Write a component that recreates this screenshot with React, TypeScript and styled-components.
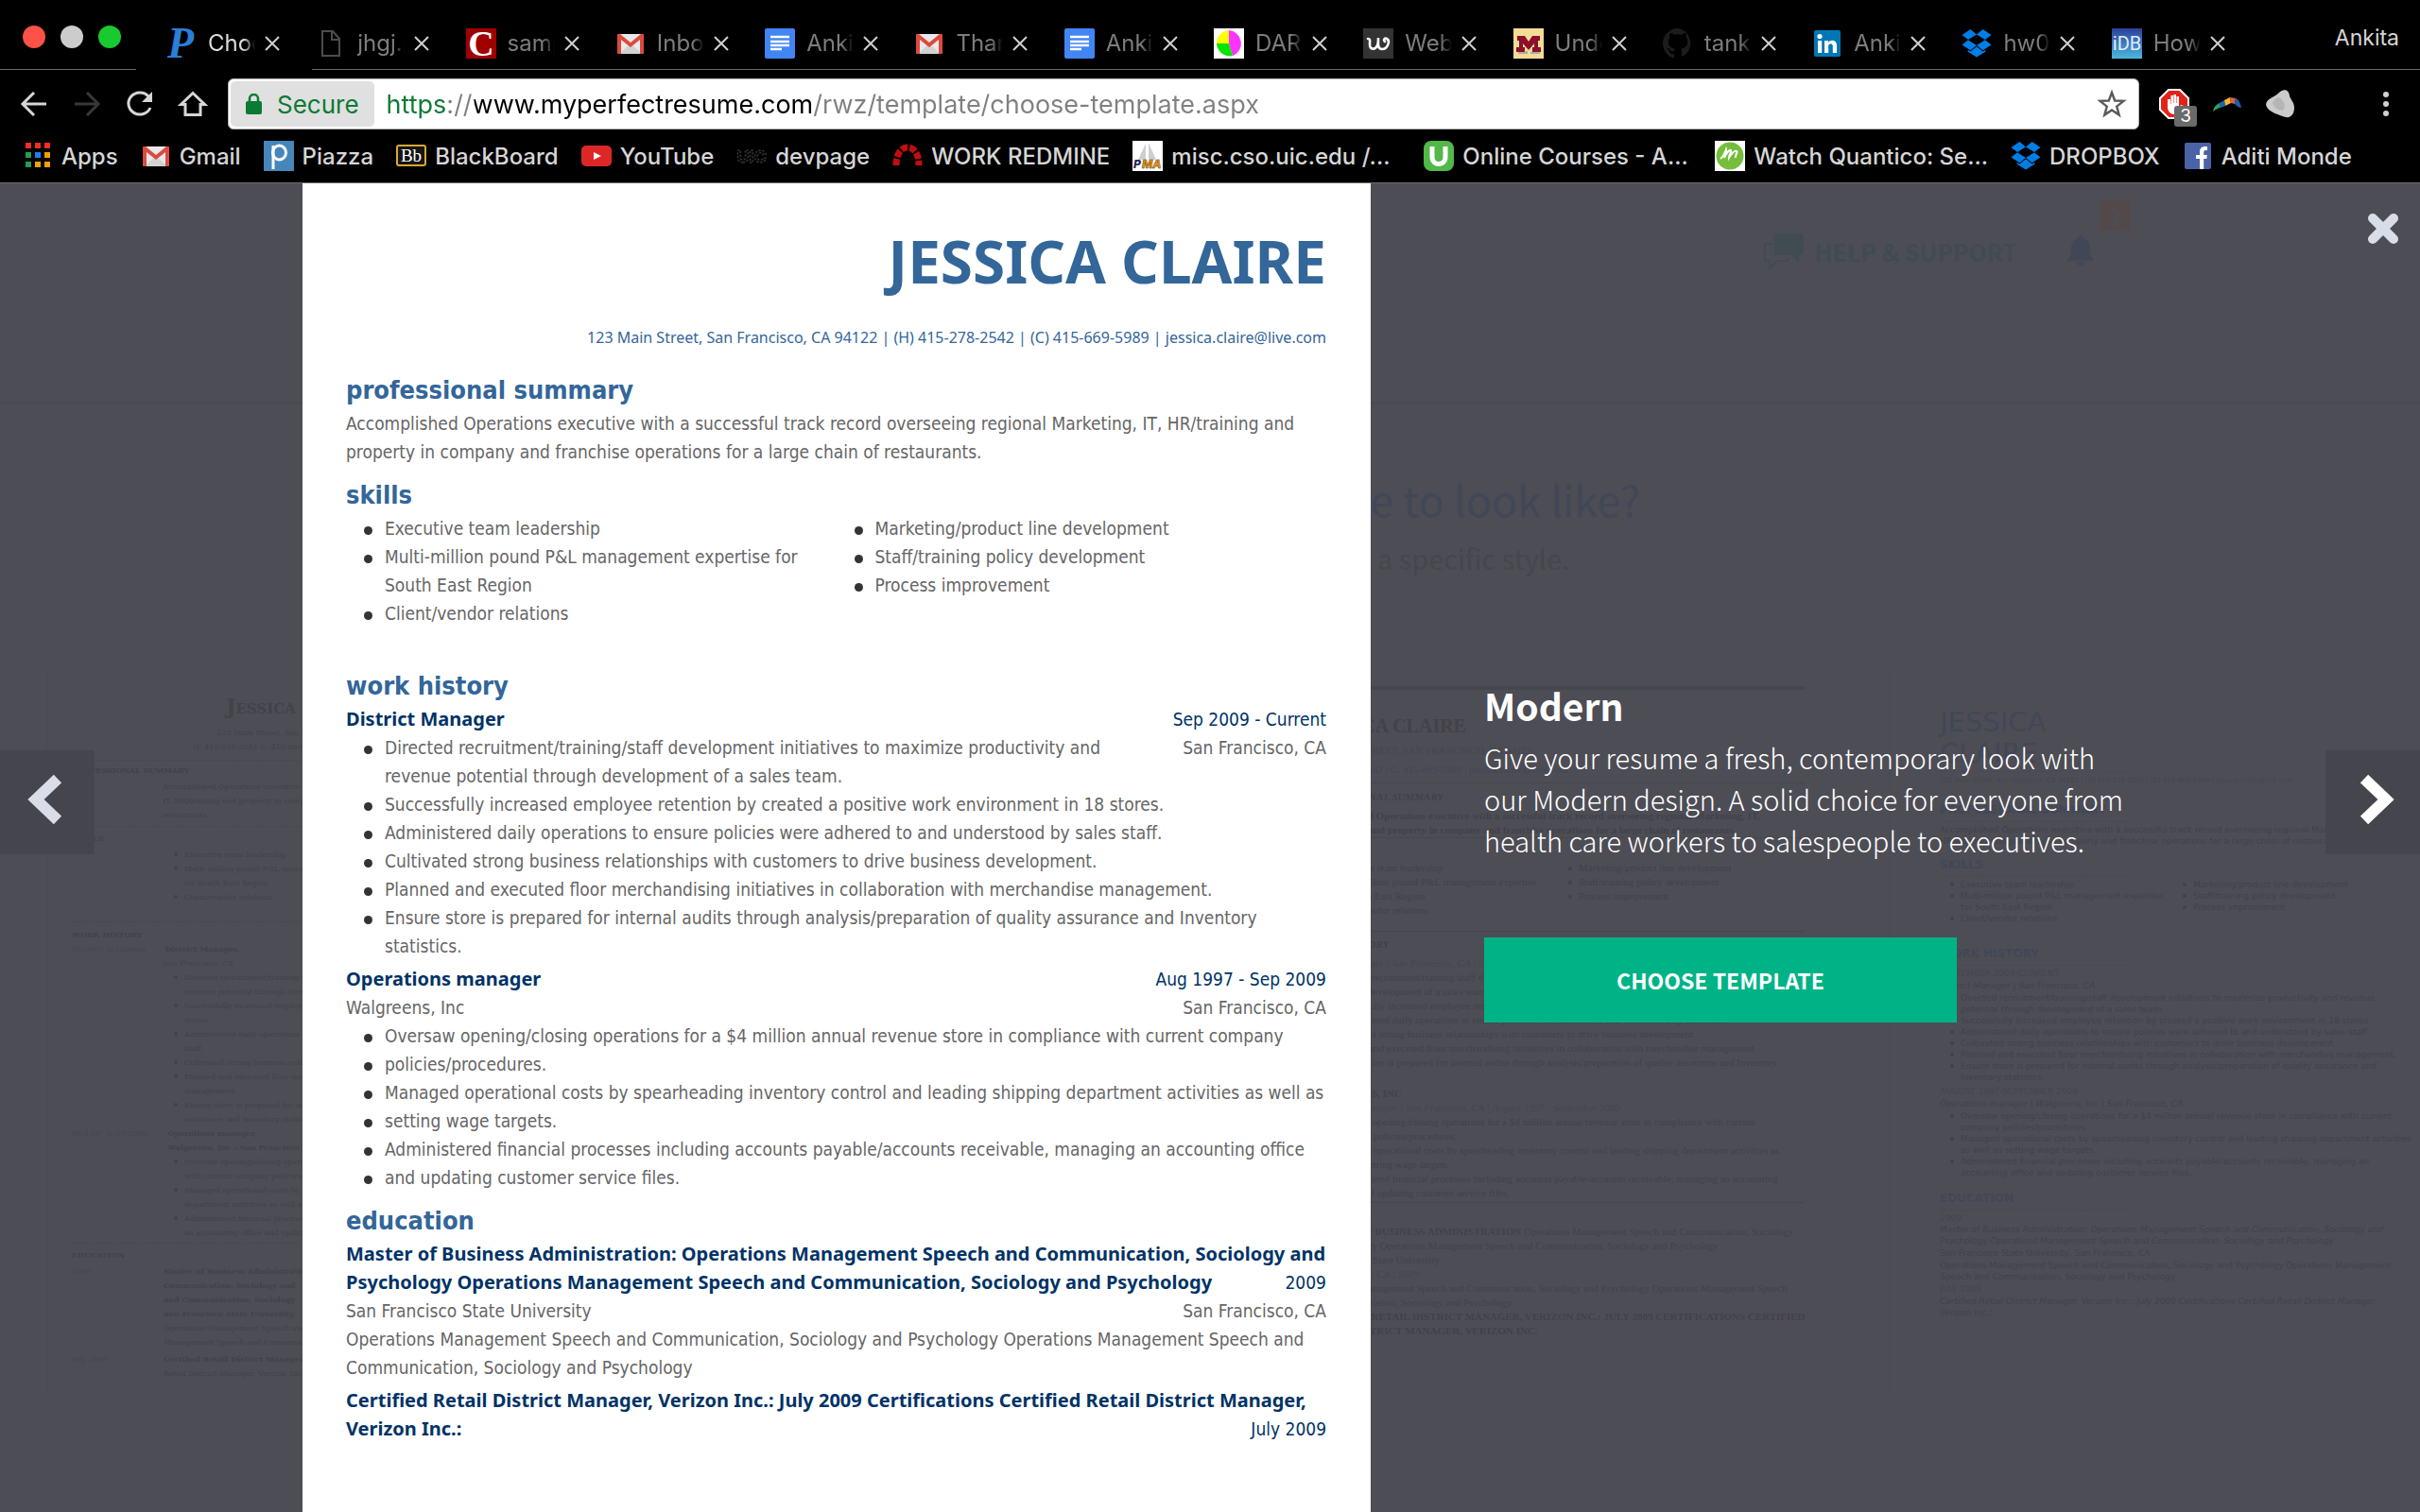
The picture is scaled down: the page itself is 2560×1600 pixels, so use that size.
import React from "react";
import styled, { createGlobalStyle, css } from "styled-components";

const uiFont = `Inter, "Liberation Sans", sans-serif`;
const docFont = `"DejaVu Sans Condensed", "Noto Sans", sans-serif`;
const siteFont = `"Noto Sans CJK SC", "Open Sans", sans-serif`;

const color = {
  overlay: "#4d4d55",
  ghost: "#424249",
  ghostFaint: "#46464c",
  ghostBlue: "#424757",
  ghostTeal: "#414b52",
  line: "#6b6b6b",
  blue: "#336699",
  navy: "#003366",
  body: "#666666",
};

const GlobalStyle = createGlobalStyle`
  *, *::before, *::after { box-sizing: border-box; }
  body { margin: 0; background: ${color.overlay}; }
  button { border: 0; padding: 0; background: none; font: inherit; color: inherit; cursor: pointer; }
  h1, h2, h3, p, ul { margin: 0; padding: 0; }
  ul { list-style: none; }
  svg { display: block; flex: none; }
`;

const Window = styled.div`
  display: flex;
  flex-direction: column;
  min-height: 100vh;
`;

/* ---------- browser chrome ---------- */

const Chrome = styled.header`
  background: #000;
  color: #d6d6d6;
  font-family: ${uiFont};
  border-bottom: 1px solid ${color.line};
`;

const TabStrip = styled.div`
  display: flex;
  height: 74px;
  border-bottom: 1px solid ${color.line};
`;

const WindowButtons = styled.div`
  display: flex;
  align-items: center;
  gap: 16px;
  width: 150px;
  padding: 4px 0 0 24px;
`;

const Light = styled.button<{ $color: string }>`
  width: 24px;
  height: 24px;
  border-radius: 50%;
  background: ${(p) => p.$color};
`;

const Tabs = styled.nav`
  flex: 1;
  display: grid;
  grid-auto-flow: column;
  grid-auto-columns: minmax(0, 1fr);
  padding-top: 18px;
`;

const Tab = styled.div<{ $active?: boolean }>`
  position: relative;
  display: flex;
  align-items: center;
  gap: 10px;
  padding-left: 26px;
  color: ${(p) => (p.$active ? "#dcdcdc" : "#7d7d7d")};
  ${(p) =>
    p.$active &&
    css`
      &::after {
        content: "";
        position: absolute;
        left: -6px;
        right: -22px;
        bottom: -1px;
        height: 1px;
        background: #000;
      }
    `}
`;

const TabButton = styled.button`
  display: flex;
  align-items: center;
  gap: 12px;
`;

const TabTitle = styled.span`
  width: 50px;
  overflow: hidden;
  white-space: nowrap;
  text-align: left;
  font-size: 24px;
  line-height: 32px;
  mask-image: linear-gradient(90deg, #000 75%, transparent);
`;

const IconButton = styled.button`
  position: relative;
  display: grid;
  place-items: center;
  flex: none;
  width: 32px;
  height: 32px;
  color: #d6d6d6;
`;

const TabClose = styled(IconButton)`
  width: 16px;
`;

const Profile = styled.button`
  width: 194px;
  padding: 6px 22px 0 0;
  text-align: right;
  font-size: 23px;
`;

const Toolbar = styled.div`
  display: flex;
  align-items: center;
  gap: 21px;
  padding: 9px 20px 0;
`;

const ButtonGroup = styled.div`
  display: flex;
  gap: 24px;
`;

const Omnibox = styled.div`
  flex: 1;
  display: flex;
  align-items: center;
  height: 54px;
  padding: 0 12px 0 2px;
  border: 1px solid #b0b4b4;
  border-radius: 6px;
  background: #fff;
`;

const SecureChip = styled.button`
  display: flex;
  align-items: center;
  gap: 16px;
  height: 48px;
  padding: 0 16px;
  border-radius: 5px;
  background: #e0e0e0;
  color: #0b7a35;
  font-size: 26px;
`;

const UrlInput = styled.input`
  flex: 1;
  min-width: 0;
  height: 48px;
  border: 0;
  outline: 0;
  padding: 0;
  margin-left: 13px;
  font: 27px ${uiFont};
  color: #808080;
  background: linear-gradient(
    90deg,
    #0b7a35 64px,
    #808080 64px 93px,
    #000 93px 451px,
    #808080 451px
  );
  background-clip: text;
  -webkit-text-fill-color: transparent;
`;

const CountBadge = styled.span`
  position: absolute;
  right: -8px;
  bottom: -8px;
  width: 24px;
  height: 22px;
  border-radius: 3px;
  background: #6a6a6a;
  color: #fff;
  font-size: 19px;
  line-height: 22px;
  text-align: center;
`;

const MenuSlot = styled.div`
  margin-left: 59px;
`;

const BookmarkBar = styled.nav`
  display: flex;
  align-items: center;
  gap: 24px;
  height: 56px;
  padding-left: 24px;
  overflow: hidden;
`;

const Bookmark = styled.a`
  display: flex;
  align-items: center;
  gap: 9px;
  color: #d6d6d6;
  text-decoration: none;
  font-size: 24px;
  font-weight: 500;
  white-space: nowrap;
`;

const BookmarkTitle = styled.span<{ $cut?: boolean }>`
  min-width: ${(p) => (p.$cut ? "243px" : "0")};
`;

/* ---------- page behind the preview ---------- */

const Stage = styled.main`
  position: relative;
  flex: 1;
  display: grid;
  grid-template-columns: 12.5% 1130px 1fr;
  overflow: hidden;
  background: ${color.overlay};
`;

const Backdrop = styled.div`
  position: absolute;
  inset: 0;
  overflow: hidden;
  color: ${color.ghost};
`;

const SiteHeader = styled.div`
  display: flex;
  justify-content: flex-end;
  align-items: flex-start;
  height: 234px;
  padding: 52px 342px 0 0;
  border-bottom: 3px solid #4a4a52;
  font-family: ${siteFont};
`;

const Help = styled.span`
  display: flex;
  align-items: center;
  gap: 12px;
  margin-right: 50px;
  color: ${color.ghostTeal};
  font-size: 25px;
  font-weight: 700;
  line-height: 40px;
`;

const Bell = styled.span`
  position: relative;
  padding-top: 3px;
  color: ${color.ghostBlue};
`;

const BellCount = styled.span`
  position: absolute;
  left: 38px;
  top: -34px;
  width: 32px;
  height: 32px;
  background: #54494a;
  color: #4d4d55;
  font-size: 22px;
  font-weight: 700;
  line-height: 32px;
  text-align: center;
`;

const Question = styled.p`
  padding-top: 70px;
  text-align: center;
  font: 400 45px/60px ${siteFont};
  color: ${color.ghostBlue};
`;

const SubQuestion = styled.p`
  padding-top: 10px;
  margin-bottom: 98px;
  text-align: center;
  font: 400 29px/44px ${siteFont};
  color: ${color.ghostFaint};
`;

const Samples = styled.div`
  display: grid;
  grid-template-columns: repeat(4, 650px);
  padding-left: 49px;
`;

const Sample = styled.div<{ $pad: number; $font: string; $size: number; $line: number }>`
  min-height: 764px;
  padding: 16px 0 0 ${(p) => p.$pad}px;
  border-left: 1px solid #4a4a51;
  font: ${(p) => p.$size}px/${(p) => p.$line}px ${(p) => p.$font};
  white-space: pre;
  overflow: hidden;
`;

const GhostText = styled.div<{
  $bold?: boolean;
  $italic?: boolean;
  $size?: number;
  $line?: number;
  $top?: number;
  $tint?: string;
}>`
  font-weight: ${(p) => (p.$bold ? 700 : 400)};
  font-style: ${(p) => (p.$italic ? "italic" : "normal")};
  ${(p) => p.$size && `font-size: ${p.$size}px;`}
  ${(p) => p.$line && `line-height: ${p.$line}px;`}
  margin-top: ${(p) => p.$top ?? 0}px;
  color: ${(p) => p.$tint ?? color.ghost};
`;

const GhostRule = styled.div<{ $weight?: number; $dash?: string; $width?: number; $top?: number }>`
  width: ${(p) => (p.$width ? `${p.$width}px` : "auto")};
  margin-top: ${(p) => p.$top ?? 0}px;
  border-top: ${(p) => p.$weight ?? 1}px ${(p) => p.$dash ?? "solid"} #46464d;
`;

const GhostColumns = styled.div<{ $first: number; $top?: number }>`
  display: grid;
  grid-template-columns: ${(p) => p.$first}px 1fr;
  margin-top: ${(p) => p.$top ?? 0}px;
`;

const GhostList = styled.ul<{ $indent?: number; $top?: number }>`
  padding-left: ${(p) => p.$indent ?? 23}px;
  margin-top: ${(p) => p.$top ?? 0}px;
`;

const GhostItem = styled.li`
  &::before {
    content: "";
    display: inline-block;
    width: 4px;
    height: 4px;
    margin: 0 7px 0 -11px;
    vertical-align: 1px;
    border-radius: 50%;
    background: ${color.ghost};
  }
`;

const SmallCaps = styled.span`
  font-variant: small-caps;
`;

/* ---------- resume preview ---------- */

const Paper = styled.article`
  position: relative;
  grid-column: 2;
  padding: 40px 47px 60px 46px;
  background: #fff;
  color: ${color.body};
  font: 19px/30px ${docFont};
`;

const Name = styled.h1`
  text-align: right;
  color: ${color.blue};
  font: 700 62px/84px "Noto Sans", sans-serif;
`;

const Contact = styled.p`
  margin: 27px 0 26px;
  text-align: right;
  color: ${color.blue};
  font: 16px/24px "Noto Sans", sans-serif;
`;

const Section = styled.section<{ $tail?: boolean }>`
  margin-bottom: ${(p) => (p.$tail ? 44 : 13)}px;
`;

const SectionTitle = styled.h2`
  margin-bottom: 2px;
  color: ${color.blue};
  font-size: 27px;
  line-height: 36px;
`;

const Lines = styled.p`
  white-space: pre;
`;

const TwoColumns = styled.div`
  display: grid;
  grid-template-columns: 1fr 1fr;
`;

const Entry = styled.div`
  & + & {
    margin-top: 5px;
  }
`;

const EntryRow = styled.div`
  display: flex;
  justify-content: space-between;
`;

const EntryTitle = styled.h3`
  color: ${color.navy};
  font: 700 20px/30px "Noto Sans", sans-serif;
  white-space: pre;
`;

const DateText = styled.span`
  color: ${color.navy};
  font: 19px/30px ${docFont};
`;

const EndDate = styled(DateText)`
  float: right;
`;

const EndPlace = styled.span`
  float: right;
`;

const Bullets = styled.ul`
  padding-left: 41px;
  white-space: pre;
`;

const Bullet = styled.li`
  &::before {
    content: "";
    display: inline-block;
    width: 9px;
    height: 9px;
    margin: 0 13px 0 -22px;
    border-radius: 50%;
    background: #333;
  }
`;

/* ---------- preview controls ---------- */

const Details = styled.aside`
  position: relative;
  align-self: center;
  padding: 6px 100px 0 120px;
  color: #fff;
  font-family: ${siteFont};
`;

const TemplateName = styled.h2`
  margin-bottom: 5px;
  font-size: 39px;
  font-weight: 700;
  line-height: 56px;
`;

const TemplateText = styled.p`
  max-width: 690px;
  margin-bottom: 81px;
  font-size: 29px;
  font-weight: 300;
  line-height: 44px;
`;

const ChooseButton = styled.button`
  display: block;
  width: 500px;
  height: 90px;
  background: #00b386;
  font-size: 23px;
  font-weight: 700;
`;

const SideButton = styled.button<{ $side: "left" | "right" }>`
  position: absolute;
  top: 600px;
  ${(p) => p.$side}: 0;
  display: grid;
  place-items: center;
  width: 100px;
  height: 110px;
  padding: ${(p) => (p.$side === "left" ? "0 7px 6px 0" : "0 0 6px 9px")};
  background: #45454d;
  color: ${(p) => (p.$side === "left" ? "#d8dde8" : "#fff")};
`;

const CloseButton = styled.button`
  position: absolute;
  top: 31px;
  right: 22px;
  color: #d8dde8;
`;

/* ---------- drawings ---------- */

const Fav = ({ children }: { children: React.ReactNode }) => (
  <svg width="32" height="32" viewBox="0 0 32 32" aria-hidden="true">
    {children}
  </svg>
);

const Glyph = ({ size = 32, children }: { size?: number; children: React.ReactNode }) => (
  <svg
    width={size}
    height={size}
    viewBox="0 0 32 32"
    fill="none"
    stroke="currentColor"
    strokeWidth="3"
    aria-hidden="true"
  >
    {children}
  </svg>
);

const GmailIcon = () => (
  <Fav>
    <rect x="2" y="6" width="28" height="21" rx="2" fill="#e9e9e9" />
    <path d="M4 27 16 16l12 11z" fill="#d2d2d2" />
    <path d="M2 8a2 2 0 0 1 3-2l11 9 11-9a2 2 0 0 1 3 2v17a2 2 0 0 1-2 2h-2V12L16 20 6 12v15H4a2 2 0 0 1-2-2z" fill="#dc4a3d" />
  </Fav>
);
const DocsIcon = () => (
  <Fav>
    <rect width="32" height="32" rx="2" fill="#4285f4" />
    <path d="M6 9h20M6 14h20M6 18h20M6 22h12" stroke="#fff" strokeWidth="2.4" />
  </Fav>
);
const DropboxIcon = () => (
  <Fav>
    <path
      fill="#007ee5"
      d="M9.4 1 16 6.5 7 12 .5 7zM22.6 1 16 6.5l9 5.500 6.500-5zM.5 17.500 7 12.300l9 5.600-6.600 5.400zM31.500 17.500 25 12.300l-9 5.600 6.600 5.400zM16 19.200l6.600 5.300 2.700-1.700v2L16 30.600l-9.300-5.800v-2l2.700 1.700z"
    />
  </Fav>
);
const PIcon = () => (
  <Fav>
    <text x="1" y="31" fontFamily="Liberation Serif" fontStyle="italic" fontWeight="700" fontSize="46" fill="#2a7fd8">P</text>
  </Fav>
);
const FileIcon = () => (
  <Fav>
    <path d="M7 3h11l7 8v18H7zM17 3v9h8" fill="none" stroke="#4c4c4c" strokeWidth="2" />
  </Fav>
);
const CIcon = () => (
  <Fav>
    <rect width="32" height="32" fill="#a00000" />
    <text x="16" y="29" textAnchor="middle" fontFamily="Liberation Serif" fontWeight="700" fontSize="38" fill="#fff">C</text>
  </Fav>
);
const PieIcon = () => (
  <Fav>
    <rect width="32" height="32" fill="#fff" />
    <path d="M16 16V2a14 14 0 0 0-13 14z" fill="#ff0" />
    <path d="M16 16H3a14 14 0 0 0 17 13z" fill="#00e600" />
    <path d="M16 16V2a14 14 0 0 1 4 27z" fill="#f3f" />
  </Fav>
);
const WIcon = () => (
  <Fav>
    <rect width="32" height="32" fill="#333" />
    <path d="M5 11c3 0 2 3 2 6 0 6 6 6 8 1 1-2 1-5 1-8 0 6-1 12 4 12 6 0 9-9 5-11-2-1-4 1-2 3" fill="none" stroke="#fff" strokeWidth="2.600" strokeLinecap="round" />
  </Fav>
);
const MIcon = () => (
  <Fav>
    <rect width="32" height="32" fill="#f3dc96" />
    <path d="M5 26h9v-2M18 26h9v-2" stroke="#aaa" strokeWidth="2" fill="none" />
    <path d="M4 8h8l4 6 4-6h8v5h-2v7h3v5h-9v-5h2v-4l-6 7-6-7v4h2v5H3v-5h3v-7H4z" fill="#8c0f2c" />
  </Fav>
);
const GithubIcon = () => (
  <Fav>
    <path
      transform="scale(2)"
      fill="#1c1c1c"
      d="M8 0C3.580 0 0 3.580 0 8c0 3.540 2.290 6.530 5.470 7.590.4.070.55-.17.55-.38v-1.490C4 14 3.480 12.500 3.320 12.050c-.1-.23-.48-.94-.82-1.130-.28-.15-.68-.52-.01-.53.63-.01 1.080.58 1.230.82.72 1.210 1.870.87 2.330.66.07-.52.28-.87.51-1.070-1.780-.2-3.640-.89-3.640-3.950 0-.87.31-1.590.82-2.150-.08-.2-.36-1.020.08-2.120 0 0 .67-.21 2.200.82a7.500 7.500 0 0 1 4 0c1.530-1.040 2.200-.82 2.200-.82.44 1.100.16 1.920.08 2.120.51.56.82 1.270.82 2.150 0 3.070-1.870 3.750-3.650 3.950.29.25.54.73.54 1.480v2.200c0 .21.15.46.55.38A8 8 0 0 0 8 0z"
    />
  </Fav>
);
const LinkedInIcon = () => (
  <Fav>
    <rect x="2" y="2" width="28" height="28" rx="2" fill="#0077b5" />
    <circle cx="8" cy="8.500" r="2.600" fill="#fff" />
    <path d="M6 13h4.200v13H6zM13 13h4v2c2-3.400 9-3.300 9 3v8h-4.200v-7c0-3.700-4.600-3.500-4.600 0v7H13z" fill="#fff" />
  </Fav>
);
const IdbIcon = () => (
  <Fav>
    <defs>
      <linearGradient id="idb" x2="0" y2="1">
        <stop stopColor="#2a3f9c" />
        <stop offset="1" stopColor="#4cb8de" />
      </linearGradient>
    </defs>
    <rect width="32" height="32" fill="url(#idb)" />
    <text x="16" y="23" textAnchor="middle" fontFamily="Roboto" fontSize="20" fill="#e3ecf8">iDB</text>
  </Fav>
);
const AppsIcon = () => {
  const fills = ["#f22d24", "#f22d24", "#f22d24", "#259b58", "#1a80f0", "#f2a000", "#259b58", "#f2a000", "#f2a000"];
  return (
    <Fav>
      {fills.map((f, i) => (
        <rect key={i} x={3 + (i % 3) * 10} y={2 + Math.floor(i / 3) * 10} width="6" height="6" fill={f} />
      ))}
    </Fav>
  );
};
const PiazzaIcon = () => (
  <Fav>
    <rect width="32" height="32" fill="#4686ba" />
    <ellipse cx="16.500" cy="12.500" rx="7" ry="7.500" fill="none" stroke="#fff" strokeWidth="3" />
    <path d="M10 5v25" stroke="#fff" strokeWidth="3" />
  </Fav>
);
const BlackboardIcon = () => (
  <Fav>
    <rect x="1" y="5" width="30" height="21" rx="2" fill="#151515" stroke="#d9a832" strokeWidth="2" />
    <text x="16" y="22" textAnchor="middle" fontFamily="Liberation Serif" fontSize="19" fill="#fff">Bb</text>
  </Fav>
);
const YoutubeIcon = () => (
  <Fav>
    <rect y="5" width="32" height="22" rx="5" fill="#dd2727" />
    <path d="m13 12 8 4-8 4z" fill="#fff" />
  </Fav>
);
const UicIcon = () => (
  <Fav>
    <text x="16" y="23" textAnchor="middle" fontFamily="Inter" fontWeight="800" fontSize="18" fill="#0a0a0a" stroke="#4a4a4a" strokeDasharray="2 2">UIC</text>
  </Fav>
);
const RedmineIcon = () => (
  <Fav>
    <path d="M4 26c0-12 5-19 12-19s12 7 12 19" fill="none" stroke="#c40d0d" strokeWidth="7" strokeDasharray="7 2" />
  </Fav>
);
const PmaIcon = () => (
  <Fav>
    <rect width="32" height="32" fill="#fff" />
    <path d="M14 3v17H6zM17 2l8 18h-8z" fill="#cfcfcf" />
    <text x="1" y="29" fontFamily="Inter" fontWeight="800" fontStyle="italic" fontSize="12" fill="#222255">P</text>
    <text x="10" y="29" fontFamily="Inter" fontWeight="800" fontStyle="italic" fontSize="12" fill="#f29100" stroke="#333" strokeWidth=".4">MA</text>
  </Fav>
);
const UdemyIcon = () => (
  <Fav>
    <rect width="32" height="32" rx="8" fill="#52b848" />
    <path d="M9 6v11c0 10 14 10 14 0V6" fill="none" stroke="#fff" strokeWidth="5" />
  </Fav>
);
const MaskIcon = () => (
  <Fav>
    <rect width="32" height="32" fill="#fff" />
    <circle cx="16" cy="16" r="14.500" fill="#76bd3c" />
    <path d="M6 19c3-2 5-7 6-10 1 3-1 6-2 9 3-6 6-9 7-8s-2 5-2 8c3-5 6-8 8-7s-2 4-1 7" fill="none" stroke="#fff" strokeWidth="2" />
  </Fav>
);
const FacebookIcon = () => (
  <Fav>
    <rect x="2" y="2" width="28" height="28" rx="2" fill="#4a63a8" />
    <path d="M18 30V19h-4v-4h4v-3c0-4.500 2.600-6.500 8-5.800v3.800c-3-.2-3.800.3-3.800 2.300V15h3.600l-.5 4h-3.100v11z" fill="#fff" />
  </Fav>
);

const CrossIcon = () => (
  <svg width="16" height="16" viewBox="0 0 16 16" aria-hidden="true">
    <path d="m1 1 14 14M15 1 1 15" stroke="#cfcfcf" strokeWidth="2" />
  </svg>
);

/* ---------- data ---------- */

const tabs = [
  { title: "Choose", icon: <PIcon /> },
  { title: "jhgj.pdf", icon: <FileIcon /> },
  { title: "sample", icon: <CIcon /> },
  { title: "Inbox", icon: <GmailIcon /> },
  { title: "Ankita", icon: <DocsIcon /> },
  { title: "Thank", icon: <GmailIcon /> },
  { title: "Ankita", icon: <DocsIcon /> },
  { title: "DARW", icon: <PieIcon /> },
  { title: "Web", icon: <WIcon /> },
  { title: "Under", icon: <MIcon /> },
  { title: "tanka", icon: <GithubIcon /> },
  { title: "Ankita", icon: <LinkedInIcon /> },
  { title: "hw04", icon: <DropboxIcon /> },
  { title: "How", icon: <IdbIcon /> },
];

const bookmarks = [
  { title: "Apps", icon: <AppsIcon /> },
  { title: "Gmail", icon: <GmailIcon /> },
  { title: "Piazza", icon: <PiazzaIcon /> },
  { title: "BlackBoard", icon: <BlackboardIcon /> },
  { title: "YouTube", icon: <YoutubeIcon /> },
  { title: "devpage", icon: <UicIcon /> },
  { title: "WORK REDMINE", icon: <RedmineIcon /> },
  { title: "misc.cso.uic.edu /...", icon: <PmaIcon />, cut: true },
  { title: "Online Courses - A...", icon: <UdemyIcon />, cut: true },
  { title: "Watch Quantico: Se...", icon: <MaskIcon />, cut: true },
  { title: "DROPBOX", icon: <DropboxIcon /> },
  { title: "Aditi Monde", icon: <FacebookIcon /> },
];

const skills = [
  ["Executive team leadership", "Multi-million pound P&L management expertise for\nSouth East Region", "Client/vendor relations"],
  ["Marketing/product line development", "Staff/training policy development", "Process improvement"],
];

const districtDuties = [
  "Directed recruitment/training/staff development initiatives to maximize productivity and\nrevenue potential through development of a sales team.",
  "Successfully increased employee retention by created a positive work environment in 18 stores.",
  "Administered daily operations to ensure policies were adhered to and understood by sales staff.",
  "Cultivated strong business relationships with customers to drive business development.",
  "Planned and executed floor merchandising initiatives in collaboration with merchandise management.",
  "Ensure store is prepared for internal audits through analysis/preparation of quality assurance and Inventory\nstatistics.",
];

const operationsDuties = [
  "Oversaw opening/closing operations for a $4 million annual revenue store in compliance with current company",
  "policies/procedures.",
  "Managed operational costs by spearheading inventory control and leading shipping department activities as well as",
  "setting wage targets.",
  "Administered financial processes including accounts payable/accounts receivable, managing an accounting office",
  "and updating customer service files.",
];

const GhostBullets = ({ items, indent, top }: { items: string[]; indent?: number; top?: number }) => (
  <GhostList $indent={indent} $top={top}>
    {items.map((t) => (
      <GhostItem key={t}>{t}</GhostItem>
    ))}
  </GhostList>
);

/* ---------- page parts ---------- */

const BrowserChrome = () => (
  <Chrome>
    <TabStrip>
      <WindowButtons>
        <Light $color="#ff5147" aria-label="Close window" />
        <Light $color="#cccccc" aria-label="Minimise window" />
        <Light $color="#18c92f" aria-label="Zoom window" />
      </WindowButtons>
      <Tabs aria-label="Tabs">
        {tabs.map((t, i) => (
          <Tab key={i} $active={i === 0}>
            <TabButton>
              {t.icon}
              <TabTitle>{t.title}</TabTitle>
            </TabButton>
            <TabClose aria-label="Close tab">
              <CrossIcon />
            </TabClose>
          </Tab>
        ))}
      </Tabs>
      <Profile>Ankita</Profile>
    </TabStrip>
    <Toolbar>
      <ButtonGroup>
        <IconButton aria-label="Back">
          <Glyph><path d="M29 16H5M16 4 4 16l12 12" /></Glyph>
        </IconButton>
        <IconButton aria-label="Forward">
          <Glyph><path stroke="#383838" d="M3 16h24M16 4l12 12-12 12" /></Glyph>
        </IconButton>
        <IconButton aria-label="Reload">
          <Glyph>
            <path d="M27 20A12 11.500 0 1 1 25 8" />
            <path d="M29 3v11H18z" fill="currentColor" stroke="none" />
          </Glyph>
        </IconButton>
        <IconButton aria-label="Home">
          <Glyph><path d="M3.500 16.500 16 4.500l12.500 12H24v11H8v-11z" /></Glyph>
        </IconButton>
      </ButtonGroup>
      <Omnibox>
        <SecureChip>
          <svg width="17" height="22" viewBox="0 0 17 22" aria-hidden="true">
            <rect y="8" width="17" height="14" rx="2" fill="currentColor" />
            <path d="M4 9V5.500a4.500 4.500 0 0 1 9 0V9" fill="none" stroke="currentColor" strokeWidth="2.500" />
          </svg>
          Secure
        </SecureChip>
        <UrlInput
          aria-label="Address"
          defaultValue="https://www.myperfectresume.com/rwz/template/choose-template.aspx"
        />
        <IconButton aria-label="Bookmark this page">
          <svg width="32" height="32" viewBox="0 0 32 32" aria-hidden="true">
            <path d="m16 4 3.200 8.500 9.300.4-7.300 5.700 2.500 9L16 22.400l-7.700 5.200 2.500-9-7.300-5.700 9.300-.4z" fill="none" stroke="#5a5a5a" strokeWidth="2.400" />
          </svg>
        </IconButton>
      </Omnibox>
      <ButtonGroup>
        <IconButton aria-label="Ad blocker">
          <Fav>
            <path d="M10 1h12l9 9v12l-9 9H10l-9-9V10z" fill="#e2231a" stroke="#fff" strokeWidth="2" />
            <path d="M9 15v4c0 5 3 8 8 8s7-4 9-9l-3-1-2 3V8h-2.500v7H18V6h-2.500v9H15V7h-2.500v9H12v-5H9z" fill="#fff" />
          </Fav>
          <CountBadge>3</CountBadge>
        </IconButton>
        <IconButton aria-label="Boomerang">
          <Fav>
            <path d="M1 24c1-5 3-7 7-9l2 4c-3 1-6 3-9 5z" fill="#2f9e5b" />
            <path d="M7 15.500 13 12l1 6-5 2z" fill="#1766b5" />
            <path d="m13 12 6-3 1 6-6 3z" fill="#f2b632" />
            <path d="m19 9 6 1-1 6-4-1z" fill="#e0603f" />
            <path d="M24.500 9.500C28 11 30 15 31 20c-3 0-5-2-7-4z" fill="#1e5fa8" />
          </Fav>
        </IconButton>
        <IconButton aria-label="Extension">
          <Fav>
            <path d="M16 3c5-3 9-2 10 4 0 3 5 7 5 13 0 7-4 11-9 10-6-2-19-5-21-13 0-7 10-8 15-14z" fill="#cbcbcb" />
            <path d="M14 9c6 2 9 10 5 14-6 0-10-4-11-8 1-3 3-5 6-6z" fill="#b5b5b5" />
          </Fav>
        </IconButton>
      </ButtonGroup>
      <MenuSlot>
        <IconButton aria-label="Menu">
          <Fav>
            <circle cx="16" cy="6" r="3" fill="#d0d0d0" />
            <circle cx="16" cy="16" r="3" fill="#d0d0d0" />
            <circle cx="16" cy="26" r="3" fill="#d0d0d0" />
          </Fav>
        </IconButton>
      </MenuSlot>
    </Toolbar>
    <BookmarkBar aria-label="Bookmarks">
      {bookmarks.map((b) => (
        <Bookmark key={b.title} href="#">
          {b.icon}
          <BookmarkTitle $cut={b.cut}>{b.title}</BookmarkTitle>
        </Bookmark>
      ))}
    </BookmarkBar>
  </Chrome>
);

const serifWide = `"DejaVu Serif", serif`;
const serif = `"Liberation Serif", serif`;
const sansWide = `"DejaVu Sans", sans-serif`;

const LeftSample = () => (
  <Sample $pad={26} $font={serifWide} $size={8} $line={15}>
    <GhostColumns $first={163}>
      <span />
      <GhostText $bold $size={22} $line={42}>
        <SmallCaps>Jessica Claire</SmallCaps>
      </GhostText>
    </GhostColumns>
    <GhostColumns $first={128}>
      <span />
      <GhostText>{"          123 Main Street, San Francisco\nH: 415-278-2542 C: 415-669-5989"}</GhostText>
    </GhostColumns>
    <GhostRule $dash="dashed" $top={6} />
    <GhostText $bold $top={3}>PROFESSIONAL SUMMARY</GhostText>
    <GhostColumns $first={96} $top={2}>
      <span />
      <GhostText>{"Accomplished Operations executive with\nIT, HR/training and property in company\nrestaurants."}</GhostText>
    </GhostColumns>
    <GhostRule $dash="dashed" $top={4} />
    <GhostText $bold $top={5}>SKILLS</GhostText>
    <GhostColumns $first={96} $top={2}>
      <span />
      <GhostBullets items={["Executive team leadership", "Multi-million pound P&L management\nfor South East Region", "Client/vendor relations"]} />
    </GhostColumns>
    <GhostRule $dash="dashed" $top={18} />
    <GhostText $bold $top={6}>WORK HISTORY</GhostText>
    <GhostColumns $first={96}>
      <GhostText $tint={color.ghostFaint}>09/2009 to Current</GhostText>
      <div>
        <GhostText $bold>{" District Manager,"}</GhostText>
        <GhostText $italic>San Francisco, CA</GhostText>
        <GhostBullets
          items={[
            "Directed recruitment/training/staff\nrevenue potential through development",
            "Successfully increased employee\nstores.",
            "Administered daily operations\nstaff.",
            "Cultivated strong business relationships",
            "Planned and executed floor merchandising\nmanagement.",
            "Ensure store is prepared for internal\nassurance and Inventory statistics.",
          ]}
        />
      </div>
      <GhostText $tint={color.ghostFaint}>08/1997 to 09/2009</GhostText>
      <div>
        <GhostText $bold>{"  Operations manager,\n  Walgreens, Inc – San Francisco"}</GhostText>
        <GhostBullets
          items={[
            "Oversaw opening/closing operations\nwith current company policies/",
            "Managed operational costs by\ndepartment activities as well as",
            "Administered financial processes\nan accounting office and updating",
          ]}
        />
      </div>
    </GhostColumns>
    <GhostRule $dash="dashed" $top={3} />
    <GhostText $bold $top={5}>EDUCATION</GhostText>
    <GhostColumns $first={97} $top={2}>
      <GhostText $tint={color.ghostFaint}>2009</GhostText>
      <div>
        <GhostText $bold>{"Master of Business Administration\nCommunication, Sociology and\nand Communication, Sociology"}</GhostText>
        <GhostText $bold $italic>San Francisco State University</GhostText>
        <GhostText>{"Operations Management Speech and\nManagement Speech and Communication"}</GhostText>
      </div>
      <GhostText $tint={color.ghostFaint} $top={3}>July 2009</GhostText>
      <div>
        <GhostText $bold $top={3}>Certified Retail District Manager</GhostText>
        <GhostText>Retail District Manager, Verizon Inc</GhostText>
      </div>
    </GhostColumns>
  </Sample>
);

const MiddleSample = () => (
  <Sample $pad={37} $font={serif} $size={11} $line={15}>
    <GhostRule $weight={4} $width={522} />
    <GhostText $bold $size={20} $line={34} $top={21}>JESSICA CLAIRE</GhostText>
    <GhostText $top={2} $tint={color.ghostFaint}>{"123 MAIN STREET, SAN FRANCISCO, CA 94122"}</GhostText>
    <GhostText $top={5} $tint={color.ghostBlue}>{"H: 415-278-2542 | C: 415-669-5989 | jessica.claire@live.com"}</GhostText>
    <GhostRule $width={522} $top={6} />
    <GhostText $bold $italic $top={7}>PROFESSIONAL SUMMARY</GhostText>
    <GhostText $bold $top={5}>
      {"Accomplished Operations executive with a successful track record overseeing regional Marketing, IT,\nHR/training and property in company and franchise operations for a large chain of restaurants."}
    </GhostText>
    <GhostRule $width={522} />
    <GhostColumns $first={260} $top={24}>
      <GhostBullets items={["Executive team leadership", "Multi-million pound P&L management expertise\nfor South East Region", "Client/vendor relations"]} />
      <GhostBullets items={["Marketing/product line development", "Staff/training policy development", "Process improvement"]} />
    </GhostColumns>
    <GhostRule $width={522} $top={14} />
    <GhostText $bold $italic $top={6}>WORK HISTORY</GhostText>
    <GhostText $italic $top={5} $tint={color.ghostFaint}>District Manager | San Francisco, CA | September 2009 - Current</GhostText>
    <GhostBullets
      items={[
        "Directed recruitment/training/staff development initiatives to maximize productivity and revenue\nthrough development of a sales team.",
        "Successfully increased employee retention by created a positive work environment in 18 stores.",
        "Administered daily operations to ensure policies were adhered to and understood by sales staff.",
        "Cultivated strong business relationships with customers to drive business development.",
        "Planned and executed floor merchandising initiatives in collaboration with merchandise management.",
        "Ensure store is prepared for internal audits through analysis/preparation of quality assurance and Inventory",
      ]}
    />
    <GhostText $bold $top={18}>WALGREENS, INC</GhostText>
    <GhostText $italic $tint={color.ghostFaint}>Operations manager | San Francisco, CA | August 1997 - September 2009</GhostText>
    <GhostBullets
      items={[
        "Oversaw opening/closing operations for a $4 million annual revenue store in compliance with current\ncompany policies/procedures.",
        "Managed operational costs by spearheading inventory control and leading shipping department activities as\nwell as setting wage targets.",
        "Administered financial processes including accounts payable/accounts receivable, managing an accounting\noffice and updating customer service files.",
      ]}
    />
    <GhostRule $width={522} $top={2} />
    <GhostText $bold $italic $top={2}>EDUCATION</GhostText>
    <GhostText $top={6}>
      <b>MASTER OF BUSINESS ADMINISTRATION</b>
      {" Operations Management Speech and Communication, Sociology\nand Psychology Operations Management Speech and Communication, Sociology and Psychology\nSan Francisco State University"}
    </GhostText>
    <GhostText $italic $tint={color.ghostFaint}>San Francisco, CA | 2009</GhostText>
    <GhostText>
      {"Operations Management Speech and Communication, Sociology and Psychology Operations Management Speech\nand Communication, Sociology and Psychology"}
    </GhostText>
    <GhostText $bold>
      {"CERTIFIED RETAIL DISTRICT MANAGER, VERIZON INC.: JULY 2009 CERTIFICATIONS CERTIFIED\nRETAIL DISTRICT MANAGER, VERIZON INC."}
    </GhostText>
  </Sample>
);

const RightTitle = ({ children, top }: { children: string; top: number }) => (
  <>
    <GhostText $bold $top={top} $size={12} $line={18} $tint={color.ghostBlue}>{children}</GhostText>
    <GhostRule $dash="dotted" $width={201} $top={3} />
  </>
);

const RightSample = () => (
  <Sample $pad={52} $font={sansWide} $size={9} $line={12}>
    <GhostText $size={29} $line={33} $top={22} $tint={color.ghostBlue}>{"JESSICA\nCLAIRE"}</GhostText>
    <GhostRule $dash="dotted" $width={201} $top={2} />
    <GhostText $size={7} $top={3} $tint={color.ghostFaint}>
      {"123 Main Street, San Francisco, CA 94122 | (H) 415-278-2542 | (C) 415-669-5989 | jessica.claire@live.com"}
    </GhostText>
    <RightTitle top={16}>PROFESSIONAL SUMMARY</RightTitle>
    <GhostText $top={2}>
      {"Accomplished Operations executive with a successful track record overseeing regional Marketing, IT,\nHR/training and property in company and franchise operations for a large chain of restaurants."}
    </GhostText>
    <RightTitle top={10}>SKILLS</RightTitle>
    <GhostColumns $first={246} $top={2}>
      <GhostBullets indent={22} items={["Executive team leadership", "Multi-million pound P&L management expertise\nfor South East Region", "Client/vendor relations"]} />
      <GhostBullets indent={22} items={["Marketing/product line development", "Staff/training policy development", "Process improvement"]} />
    </GhostColumns>
    <RightTitle top={22}>WORK HISTORY</RightTitle>
    <GhostText $top={2} $tint={color.ghostFaint}>SEPTEMBER 2009-CURRENT</GhostText>
    <GhostText $italic $top={1}>District Manager | San Francisco, CA</GhostText>
    <GhostBullets
      indent={22}
      top={1}
      items={[
        "Directed recruitment/training/staff development initiatives to maximize productivity and revenue\npotential through development of a sales team.",
        ...districtDuties.slice(1, 5),
        "Ensure store is prepared for internal audits through analysis/preparation of quality assurance and\nInventory statistics.",
      ]}
    />
    <GhostText $top={3} $tint={color.ghostFaint}>AUGUST 1997-SEPTEMBER 2009</GhostText>
    <GhostText $italic $top={1}>Operations manager | Walgreens, Inc | San Francisco, CA</GhostText>
    <GhostBullets
      indent={22}
      top={1}
      items={[
        "Oversaw opening/closing operations for a $4 million annual revenue store in compliance with current\ncompany policies/procedures.",
        "Managed operational costs by spearheading inventory control and leading shipping department activities\nas well as setting wage targets.",
        "Administered financial processes including accounts payable/accounts receivable, managing an\naccounting office and updating customer service files.",
      ]}
    />
    <RightTitle top={12}>EDUCATION</RightTitle>
    <GhostText $top={2} $tint={color.ghostFaint}>2009</GhostText>
    <GhostText $italic>
      {"Master of Business Administration: Operations Management Speech and Communication, Sociology and\nPsychology Operations Management Speech and Communication, Sociology and Psychology"}
    </GhostText>
    <GhostText $top={1}>San Francisco State University, San Francisco, CA</GhostText>
    <GhostText $top={1}>
      {"Operations Management Speech and Communication, Sociology and Psychology Operations Management\nSpeech and Communication, Sociology and Psychology"}
    </GhostText>
    <GhostText $top={1} $tint={color.ghostFaint}>JULY 2009</GhostText>
    <GhostText $italic $top={1}>
      {"Certified Retail District Manager, Verizon Inc.: July 2009 Certifications Certified Retail District Manager,\nVerizon Inc.:"}
    </GhostText>
  </Sample>
);

const DimmedPage = () => (
  <Backdrop aria-hidden="true">
    <SiteHeader>
      <Help>
        <svg width="42" height="40" viewBox="0 0 42 40">
          <path d="M14 1h25a3 3 0 0 1 3 3v17a3 3 0 0 1-3 3h-2v8l-8-8H14a3 3 0 0 1-3-3V4a3 3 0 0 1 3-3z" fill="currentColor" />
          <path d="M9 12H3a2 2 0 0 0-2 2v14a2 2 0 0 0 2 2h3v8l8-8h10l3-3" fill="none" stroke="currentColor" strokeWidth="2" />
        </svg>
        HELP &amp; SUPPORT
      </Help>
      <Bell>
        <svg width="34" height="34" viewBox="0 0 34 34">
          <path d="M17 0c2 0 2 2 3 3 5 2 7 6 7 12 0 7 2 9 5 12H2c3-3 5-5 5-12C7 9 9 5 14 3c1-1 1-3 3-3zM13 28h8a4 4 0 0 1-8 0z" fill="currentColor" />
        </svg>
        <BellCount>2</BellCount>
      </Bell>
    </SiteHeader>
    <Question>What do you want your resume to look like?</Question>
    <SubQuestion>Scroll to view all styles and click to select a specific style.</SubQuestion>
    <Samples>
      <LeftSample />
      <span />
      <MiddleSample />
      <RightSample />
    </Samples>
  </Backdrop>
);

const Resume = () => (
  <Paper>
    <Name>JESSICA CLAIRE</Name>
    <Contact>
      123 Main Street, San Francisco, CA 94122 | (H) 415-278-2542 | (C) 415-669-5989 | jessica.claire@live.com
    </Contact>
    <Section>
      <SectionTitle>professional summary</SectionTitle>
      <Lines>
        {"Accomplished Operations executive with a successful track record overseeing regional Marketing, IT, HR/training and\nproperty in company and franchise operations for a large chain of restaurants."}
      </Lines>
    </Section>
    <Section $tail>
      <SectionTitle>skills</SectionTitle>
      <TwoColumns>
        {skills.map((column, i) => (
          <Bullets key={i}>
            {column.map((t) => (
              <Bullet key={t}>{t}</Bullet>
            ))}
          </Bullets>
        ))}
      </TwoColumns>
    </Section>
    <Section>
      <SectionTitle>work history</SectionTitle>
      <Entry>
        <EntryRow>
          <EntryTitle>District Manager</EntryTitle>
          <DateText>Sep 2009 - Current</DateText>
        </EntryRow>
        <EndPlace>San Francisco, CA</EndPlace>
        <Bullets>
          {districtDuties.map((t) => (
            <Bullet key={t}>{t}</Bullet>
          ))}
        </Bullets>
      </Entry>
      <Entry>
        <EntryRow>
          <EntryTitle>Operations manager</EntryTitle>
          <DateText>Aug 1997 - Sep 2009</DateText>
        </EntryRow>
        <EntryRow>
          <span>Walgreens, Inc</span>
          <span>San Francisco, CA</span>
        </EntryRow>
        <Bullets>
          {operationsDuties.map((t) => (
            <Bullet key={t}>{t}</Bullet>
          ))}
        </Bullets>
      </Entry>
    </Section>
    <Section>
      <SectionTitle>education</SectionTitle>
      <Entry>
        <EntryTitle>
          {"Master of Business Administration: Operations Management Speech and Communication, Sociology and\n"}
          <EndDate>2009</EndDate>
          {"Psychology Operations Management Speech and Communication, Sociology and Psychology"}
        </EntryTitle>
        <EntryRow>
          <span>San Francisco State University</span>
          <span>San Francisco, CA</span>
        </EntryRow>
        <Lines>
          {"Operations Management Speech and Communication, Sociology and Psychology Operations Management Speech and\nCommunication, Sociology and Psychology"}
        </Lines>
      </Entry>
      <Entry>
        <EntryTitle>
          {"Certified Retail District Manager, Verizon Inc.: July 2009 Certifications Certified Retail District Manager,\n"}
          <EndDate>July 2009</EndDate>
          {"Verizon Inc.:"}
        </EntryTitle>
      </Entry>
    </Section>
  </Paper>
);

export default function App() {
  return (
    <Window>
      <GlobalStyle />
      <BrowserChrome />
      <Stage>
        <DimmedPage />
        <Resume />
        <Details>
          <TemplateName>Modern</TemplateName>
          <TemplateText>
            Give your resume a fresh, contemporary look with our Modern design. A solid choice for everyone from
            health care workers to salespeople to executives.
          </TemplateText>
          <ChooseButton>CHOOSE TEMPLATE</ChooseButton>
        </Details>
        <SideButton $side="left" aria-label="Previous template">
          <svg width="36" height="54" viewBox="0 0 36 54" aria-hidden="true">
            <path d="M32 5 9 27l23 22" fill="none" stroke="currentColor" strokeWidth="12" />
          </svg>
        </SideButton>
        <SideButton $side="right" aria-label="Next template">
          <svg width="36" height="54" viewBox="0 0 36 54" aria-hidden="true">
            <path d="m4 5 23 22L4 49" fill="none" stroke="currentColor" strokeWidth="12" />
          </svg>
        </SideButton>
        <CloseButton aria-label="Close preview">
          <svg width="34" height="34" viewBox="0 0 34 34" aria-hidden="true">
            <path d="m6 6 22 22M28 6 6 28" stroke="currentColor" strokeWidth="10" strokeLinecap="round" />
          </svg>
        </CloseButton>
      </Stage>
    </Window>
  );
}
